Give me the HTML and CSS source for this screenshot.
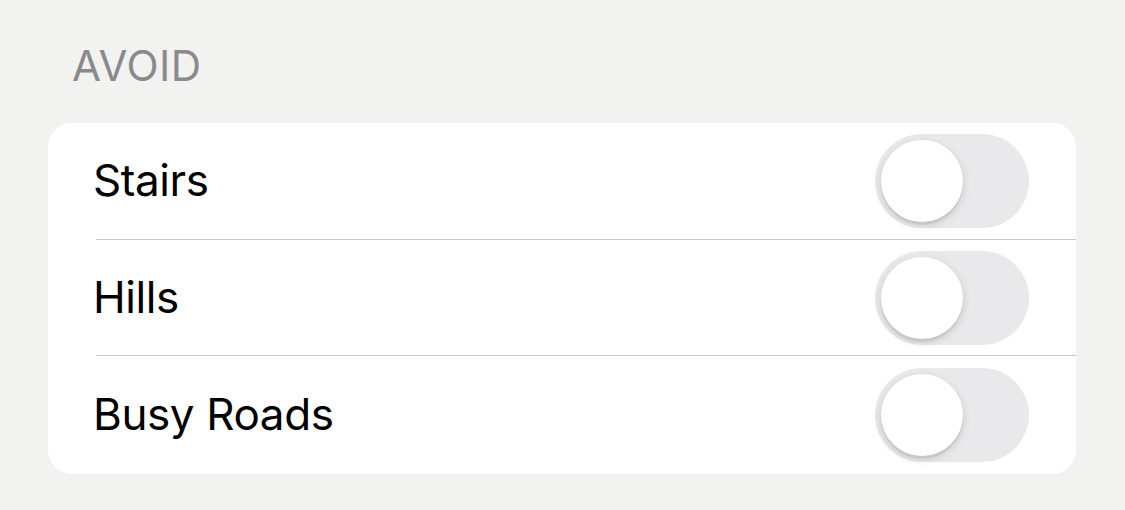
FILE: index.html
```html
<!DOCTYPE html>
<html lang="en">
<head>
  <meta charset="UTF-8">
  <title>Avoid</title>
  <link rel="stylesheet" href="styles.css">
</head>
<body>
  <!--SECTION HEADER-->
  <div class="section-title">AVOID</div>

  <!--OPTIONS CARD-->
  <div class="card">
    <div class="row">
      <span class="label">Stairs</span>
      <div class="toggle"><div class="knob"></div></div>
    </div>
    <div class="row">
      <span class="label">Hills</span>
      <div class="toggle"><div class="knob"></div></div>
    </div>
    <div class="row">
      <span class="label">Busy Roads</span>
      <div class="toggle"><div class="knob"></div></div>
    </div>
  </div>
</body>
</html>
```

FILE: styles.css
```css
* {
  margin: 0;
  padding: 0;
  box-sizing: border-box;
}

body {
  font-family: Inter, "Noto Sans", sans-serif;
  background-color: #f2f2f1;
  padding: 0 49px 0 48px;
  height: 510px;
  overflow: hidden;
}

.section-title {
  color: #8a8a8e;
  font-size: 42px;
  letter-spacing: 0.4px;
  line-height: 50px;
  padding: 41px 0 0 24px;
  height: 123px;
}

.card {
  background-color: #fff;
  border-radius: 24px;
  overflow: hidden;
}

.row {
  display: flex;
  justify-content: space-between;
  align-items: center;
  height: 117px;
  margin-left: 48px;
  padding-right: 47px;
  border-bottom: 1px solid #c8c8ca;
}

.row:nth-child(2) {
  height: 116px;
}

.row:last-child {
  border-bottom: none;
  height: 118px;
}

.label {
  font-size: 44px;
  letter-spacing: -0.4px;
  color: #000;
  margin-left: -3px;
  margin-top: -2px;
}

.toggle {
  width: 154px;
  height: 94px;
  border-radius: 47px;
  background-color: #e9e9eb;
  padding: 6px;
  display: flex;
  align-items: center;
}

.knob {
  width: 82px;
  height: 82px;
  border-radius: 50%;
  background-color: #fff;
  box-shadow: 0 3px 8px rgba(0, 0, 0, 0.15), 0 3px 1px rgba(0, 0, 0, 0.06);
}
```
